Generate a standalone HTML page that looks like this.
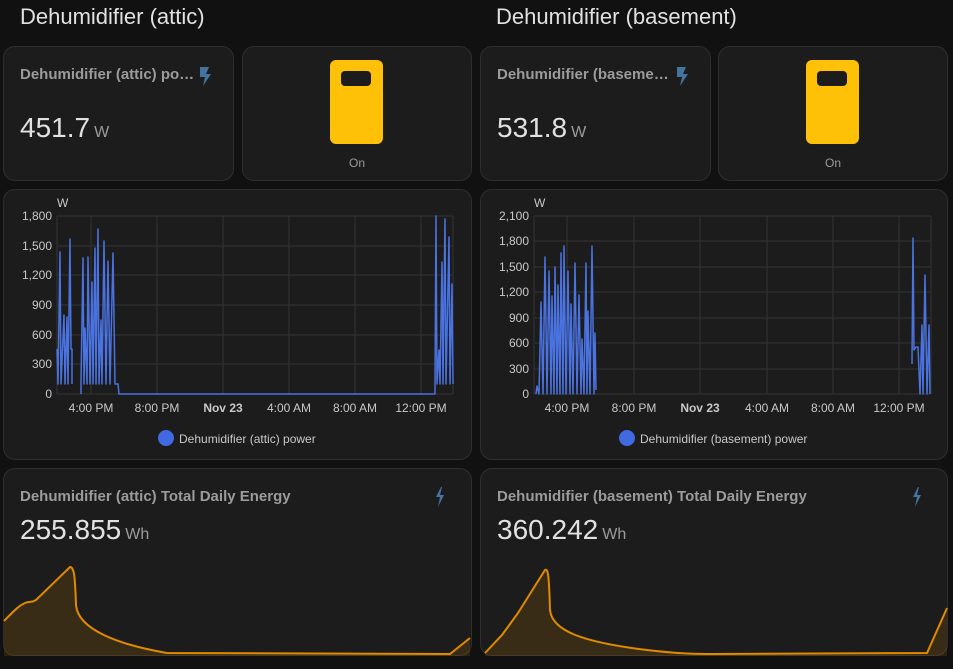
<!DOCTYPE html>
<html><head><meta charset="utf-8"><style>
body{margin:0;width:953px;height:669px;background:#111;overflow:hidden;font-family:"Liberation Sans",sans-serif;position:relative}
.h{position:absolute;top:4px;font-size:22px;color:#e1e1e1}
.c{position:absolute;background:#1c1c1c;border:1px solid #2e2e2e;border-radius:12px;box-sizing:border-box}
.t{position:absolute;font-size:15px;font-weight:bold;color:#9b9b9b;white-space:nowrap}
.v{position:absolute;font-size:28px;color:#e1e1e1}
.v span{font-size:16px;color:#9b9b9b;margin-left:4px}
svg{position:absolute;left:0;top:0}
</style></head><body>
<div class="h" style="left:20px">Dehumidifier (attic)</div>
<div class="h" style="left:496px">Dehumidifier (basement)</div>

<div class="c" style="left:3px;top:46px;width:231px;height:135px"></div>
<div class="c" style="left:242px;top:46px;width:230px;height:135px"></div>
<div class="c" style="left:480px;top:46px;width:231px;height:135px"></div>
<div class="c" style="left:718px;top:46px;width:230px;height:135px"></div>
<div class="c" style="left:3px;top:189px;width:469px;height:271px"></div>
<div class="c" style="left:480px;top:189px;width:468px;height:271px"></div>
<div class="c" style="left:3px;top:468px;width:469px;height:188px;overflow:hidden"></div>
<div class="c" style="left:480px;top:468px;width:468px;height:188px;overflow:hidden"></div>

<div class="t" style="left:20px;top:66px">Dehumidifier (attic) po…</div>
<div class="t" style="left:497px;top:66px">Dehumidifier (baseme…</div>
<div class="v" style="left:20px;top:112px">451.7<span>W</span></div>
<div class="v" style="left:497px;top:112px">531.8<span>W</span></div>
<div style="position:absolute;left:330px;top:60px;width:53px;height:84px;background:#ffc107;border-radius:6px"><div style="position:absolute;left:11px;top:11px;width:30px;height:15px;background:#1c1c1c;border-radius:4px"></div></div>
<div style="position:absolute;left:806px;top:60px;width:53px;height:84px;background:#ffc107;border-radius:6px"><div style="position:absolute;left:11px;top:11px;width:30px;height:15px;background:#1c1c1c;border-radius:4px"></div></div>
<div style="position:absolute;left:349px;top:156px;font-size:12px;color:#9b9b9b">On</div>
<div style="position:absolute;left:825px;top:156px;font-size:12px;color:#9b9b9b">On</div>

<div class="t" style="left:20px;top:488px">Dehumidifier (attic) Total Daily Energy</div>
<div class="t" style="left:497px;top:488px">Dehumidifier (basement) Total Daily Energy</div>
<div class="v" style="left:20px;top:514px">255.855<span>Wh</span></div>
<div class="v" style="left:497px;top:514px">360.242<span>Wh</span></div>

<svg width="953" height="669" viewBox="0 0 953 669">
<g fill="#44739e">
<path d="M200 67h9l-3 7h5l-8 12 2-9h-5z"/>
<path d="M677 67h9l-3 7h5l-8 12 2-9h-5z"/>
<path d="M441 487l-5 10h4l-2 10 6-12h-4l2-8z"/>
<path d="M918 487l-5 10h4l-2 10 6-12h-4l2-8z"/>
</g>
<g stroke="#333" stroke-width="1" fill="none">
<path d="M57 216H453M57 246H453M57 275H453M57 305H453M57 335H453M57 364H453M57 394H453"/>
<path d="M57 216V394M91 216V394M157 216V394M223 216V394M289 216V394M355 216V394M421 216V394M453 216V394"/>
<path d="M534 216H931M534 241H931M534 267H931M534 292H931M534 318H931M534 343H931M534 369H931M534 394H931"/>
<path d="M534 216V394M567 216V394M634 216V394M700 216V394M767 216V394M833 216V394M899 216V394M931 216V394"/>
</g>
<g font-size="12" fill="#c8c8c8" font-family="Liberation Sans,sans-serif">
<text x="57" y="207">W</text>
<g text-anchor="end"><text x="52" y="220">1,800</text><text x="52" y="250">1,500</text><text x="52" y="279">1,200</text><text x="52" y="309">900</text><text x="52" y="339">600</text><text x="52" y="368">300</text><text x="52" y="398">0</text></g>
<g text-anchor="middle"><text x="91" y="412">4:00 PM</text><text x="157" y="412">8:00 PM</text><text x="223" y="412" font-weight="bold">Nov 23</text><text x="289" y="412">4:00 AM</text><text x="355" y="412">8:00 AM</text><text x="421" y="412">12:00 PM</text></g>
<text x="534" y="207">W</text>
<g text-anchor="end"><text x="529" y="220">2,100</text><text x="529" y="245">1,800</text><text x="529" y="271">1,500</text><text x="529" y="296">1,200</text><text x="529" y="322">900</text><text x="529" y="347">600</text><text x="529" y="373">300</text><text x="529" y="398">0</text></g>
<g text-anchor="middle"><text x="567" y="412">4:00 PM</text><text x="634" y="412">8:00 PM</text><text x="700" y="412" font-weight="bold">Nov 23</text><text x="767" y="412">4:00 AM</text><text x="833" y="412">8:00 AM</text><text x="899" y="412">12:00 PM</text></g>
<text x="179" y="443">Dehumidifier (attic) power</text>
<text x="640" y="443">Dehumidifier (basement) power</text>
</g>
<circle cx="166" cy="438" r="8" fill="#4169e1"/>
<circle cx="627" cy="438" r="8" fill="#4169e1"/>
<g stroke="#4a72e0" stroke-width="1.5" fill="none" stroke-linejoin="round">
<polyline points="57,349 58,384 60,252 61,384 64,315 65,384 67,317 68,384 70,239 71,349 72,349 72,384"/>
<polyline points="81,394 81,383 83,258 84,384 85,328 87,384 88,257 90,384 92,282 93,384 95,248 96,384 98,229 99,384 101,320 102,384 104,241 106,384 108,261 110,384 113,253 115,384 118,384 119,394 435,394 435,384 436,216 437,384 439,350 440,384 442,262 443,384 445,219 446,384 449,237 450,384 452,284 453,384"/>
<polyline points="536,394 537,386 539,394 541,302 543,394 545,257 547,394 549,271 551,394 552,296 554,394 555,267 557,394 558,285 560,394 561,253 563,394 564,246 566,394 568,271 570,394 571,304 573,394 575,263 577,394 579,295 581,394 582,339 584,394 586,263 587,394 588,311 590,394 592,246 594,394 595,333 596,390"/>
<polyline points="912,364 913,238 914,350 916,347 918,347 920,394 922,325 923,394 925,275 927,394 929,325 930,394"/>
</g>
<g fill="rgba(224,138,0,0.15)" stroke="none">
<path d="M4 621C12 613 18 606 25 603C30 601 31 603 36 600L70 567C74 567 75 575 76 605C78 630 120 645 167 653L450 654L470 638L470 656L4 656Z"/>
<path d="M485 653L502 635L518 613L545 570C548 568 549 575 550 610C552 630 580 642 647 650C680 654 700 654 713 654L927 653L947 608L947 656L485 656Z"/>
</g>
<g stroke="#e08a00" stroke-width="2" fill="none">
<path d="M4 621C12 613 18 606 25 603C30 601 31 603 36 600L70 567C74 567 75 575 76 605C78 630 120 645 167 653L450 654L470 638"/>
<path d="M485 653L502 635L518 613L545 570C548 568 549 575 550 610C552 630 580 642 647 650C680 654 700 654 713 654L927 653L947 608"/>
</g>
</svg>
</body></html>
